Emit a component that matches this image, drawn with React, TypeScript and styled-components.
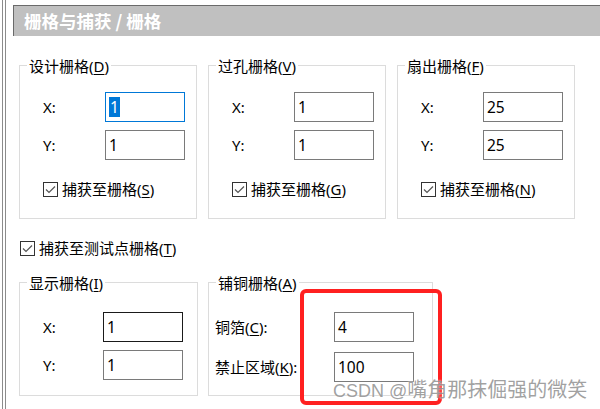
import React from 'react'
import styled, { createGlobalStyle } from 'styled-components'

const GlobalStyle = createGlobalStyle`
  html, body {
    margin: 0;
    padding: 0;
    background: #ffffff;
  }
  body {
    font-family: "Noto Sans", "Noto Sans CJK SC", sans-serif;
    font-size: 15px;
    line-height: 20px;
    color: #000000;
  }
`

const Page = styled.div`
  position: relative;
  width: 600px;
  height: 409px;
  overflow: hidden;
  display: flex;
  background: #ffffff;
`

const Rail = styled.div`
  box-sizing: border-box;
  width: 4px;
  margin: 0 7px 0 2px;
  border-left: 1px solid #8c8c8c;
  border-right: 1px solid #8c8c8c;
`

const Main = styled.div`
  flex: 1;
  display: flex;
  flex-direction: column;
`

const Header = styled.div`
  box-sizing: border-box;
  margin-top: 5px;
  height: 31px;
  display: flex;
  align-items: center;
  padding-left: 10px;
  background: #c0c0c0;
  border-top: 1px solid #6a6a6a;
  border-left: 1px solid #6a6a6a;
  color: #ffffff;
  font-family: "Noto Sans CJK SC", sans-serif;
  font-weight: 700;
  font-size: 17.5px;
  white-space: pre;
`

const Content = styled.div`
  display: flex;
  flex-direction: column;
  padding: 29px 0 0 6px;
`

const Row = styled.div<{ $gap: number; $top?: number }>`
  display: flex;
  gap: ${(p) => p.$gap}px;
  margin-top: ${(p) => p.$top ?? 0}px;
`

const Group = styled.div<{ $w: number; $h: number; $pt: number }>`
  position: relative;
  box-sizing: border-box;
  width: ${(p) => p.$w}px;
  height: ${(p) => p.$h}px;
  border: 1px solid #dcdcdc;
  padding-top: ${(p) => p.$pt}px;
  display: flex;
  flex-direction: column;
`

const Caption = styled.span`
  position: absolute;
  left: 7px;
  top: -10px;
  padding: 0 2px;
  background: #ffffff;
  white-space: nowrap;
`

const Field = styled.div<{ $pl: number; $lw: number; $mt?: number }>`
  display: flex;
  align-items: center;
  height: 30px;
  padding-left: ${(p) => p.$pl}px;
  margin-top: ${(p) => p.$mt ?? 0}px;

  & > span:first-child {
    width: ${(p) => p.$lw}px;
    white-space: nowrap;
  }
`

const TextBox = styled.div<{ $tone?: 'focus' | 'dark' | 'normal' }>`
  box-sizing: border-box;
  width: 80px;
  height: 30px;
  display: flex;
  align-items: center;
  padding-left: 3px;
  background: #ffffff;
  border: 1px solid
    ${(p) => (p.$tone === 'focus' ? '#0078d7' : p.$tone === 'dark' ? '#1a1a1a' : '#7a7a7a')};
  font-size: 15.5px;
`

const Selected = styled.span`
  background: #0078d7;
  color: #ffffff;
  padding: 0 1px;
  line-height: 20px;
`

const Check = styled.label<{ $pl: number; $mt: number }>`
  display: flex;
  align-items: center;
  gap: 4px;
  height: 20px;
  padding-left: ${(p) => p.$pl}px;
  margin-top: ${(p) => p.$mt}px;
  white-space: nowrap;
`

const Box = styled.span`
  box-sizing: border-box;
  width: 15px;
  height: 15px;
  border: 1px solid #333333;
  display: flex;
  align-items: center;
  justify-content: center;
`

const U = styled.span`
  text-decoration: underline;
  text-underline-offset: 2px;
`

const Mark = styled.div`
  position: absolute;
  left: 300px;
  top: 289px;
  width: 142px;
  height: 116px;
  box-sizing: border-box;
  border: 4px solid #ff2020;
  border-radius: 6px;
`

const Watermark = styled.div`
  position: absolute;
  left: 333px;
  top: 377px;
  color: rgba(130, 130, 130, 0.75);
  text-shadow: 0 0 2px #ffffff;
  white-space: nowrap;
  line-height: 24px;

  & > b {
    font-weight: 400;
    font-family: "Liberation Sans", sans-serif;
    font-size: 18px;
  }
  & > i {
    font-style: normal;
    font-family: "Noto Sans CJK SC", sans-serif;
    font-size: 20px;
  }
`

const Tick = () => (
  <svg width="13" height="13" viewBox="0 0 13 13">
    <polyline points="2,6.5 5,9.5 11,3.5" fill="none" stroke="#555555" strokeWidth="1.2" />
  </svg>
)

const CheckItem: React.FC<{ pl: number; mt: number; children: React.ReactNode }> = ({ pl, mt, children }) => (
  <Check $pl={pl} $mt={mt}>
    <Box>
      <Tick />
    </Box>
    <span>{children}</span>
  </Check>
)

interface GridGroupProps {
  title: string
  hot: string
  x: string
  y: string
  snap: string
  snapHot: string
  focused?: boolean
}

const GridGroup: React.FC<GridGroupProps> = ({ title, hot, x, y, snap, snapHot, focused }) => (
  <Group $w={178} $h={154} $pt={26}>
    <Caption>
      {title}(<U>{hot}</U>)
    </Caption>
    <Field $pl={23} $lw={62}>
      <span>X:</span>
      <TextBox $tone={focused ? 'focus' : 'normal'}>{focused ? <Selected>{x}</Selected> : x}</TextBox>
    </Field>
    <Field $pl={23} $lw={62} $mt={8}>
      <span>Y:</span>
      <TextBox>{y}</TextBox>
    </Field>
    <CheckItem pl={23} mt={19}>
      {snap}(<U>{snapHot}</U>)
    </CheckItem>
  </Group>
)

export default function App() {
  return (
    <Page>
      <GlobalStyle />
      <Rail />
      <Main>
        <Header>栅格与捕获 / 栅格</Header>
        <Content>
          <Row $gap={11}>
            <GridGroup title="设计栅格" hot="D" x="1" y="1" snap="捕获至栅格" snapHot="S" focused />
            <GridGroup title="过孔栅格" hot="V" x="1" y="1" snap="捕获至栅格" snapHot="G" />
            <GridGroup title="扇出栅格" hot="F" x="25" y="25" snap="捕获至栅格" snapHot="N" />
          </Row>
          <CheckItem pl={1} mt={19}>
            捕获至测试点栅格(<U>T</U>)
          </CheckItem>
          <Row $gap={10} $top={24}>
            <Group $w={179} $h={114} $pt={29}>
              <Caption>
                显示栅格(<U>I</U>)
              </Caption>
              <Field $pl={23} $lw={60}>
                <span>X:</span>
                <TextBox $tone="dark">1</TextBox>
              </Field>
              <Field $pl={23} $lw={60} $mt={8}>
                <span>Y:</span>
                <TextBox>1</TextBox>
              </Field>
            </Group>
            <Group $w={225} $h={114} $pt={29}>
              <Caption>
                铺铜栅格(<U>A</U>)
              </Caption>
              <Field $pl={6} $lw={119}>
                <span>
                  铜箔(<U>C</U>):
                </span>
                <TextBox>4</TextBox>
              </Field>
              <Field $pl={6} $lw={119} $mt={10}>
                <span>
                  禁止区域(<U>K</U>):
                </span>
                <TextBox>100</TextBox>
              </Field>
            </Group>
          </Row>
        </Content>
      </Main>
      <Mark />
      <Watermark>
        <b>CSDN @</b>
        <i>嘴角那抹倔强的微笑</i>
      </Watermark>
    </Page>
  )
}
